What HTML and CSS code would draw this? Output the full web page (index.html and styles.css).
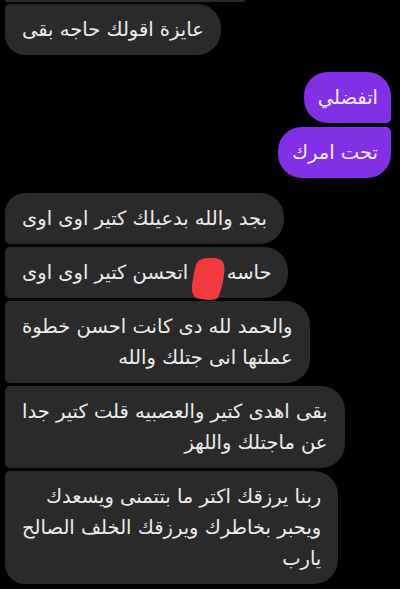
FILE: index.html
```html
<!DOCTYPE html>
<html>
  <head>
    <meta charset="utf-8">
    <link rel="stylesheet" href="styles.css">
  </head>
  <body>
    <div class="chat">
      <div class="prev-tail"></div>

      <div class="msg in last" dir="rtl">عايزة اقولك حاجه بقى</div>

      <div class="group-out">
        <div class="msg out first" dir="rtl">اتفضلي</div>
        <div class="msg out last" dir="rtl">تحت امرك</div>
      </div>

      <div class="group-in">
        <div class="msg in first" dir="rtl">بجد والله بدعيلك كتير اوى اوى</div>
        <div class="msg in" dir="rtl">حاسه <span class="hidden-word"><svg class="blob" viewBox="0 0 36 44" width="36" height="44"><path d="M10 3 C16 0 26 0 31 3 C35 6 35 12 34 18 C33 26 31 34 28 41 C24 44 14 43 6 41 C3 38 1 34 2 28 C3 22 4 14 6 8 C7 5 8 4 10 3 Z" fill="#f2393e"/></svg></span> اتحسن كتير اوى اوى</div>
        <div class="msg in" dir="rtl">والحمد لله دى كانت احسن خطوة<br>عملتها انى جتلك والله</div>
        <div class="msg in" dir="rtl">بقى اهدى كتير والعصبيه قلت كتير جدا<br>عن ماجتلك واللهز</div>
        <div class="msg in last" dir="rtl">ربنا يرزقك اكتر ما بتتمنى ويسعدك<br>ويحبر بخاطرك ويرزقك الخلف الصالح<br>يارب</div>
      </div>
    </div>
  </body>
</html>
```

FILE: styles.css
```css
* {
  margin: 0;
  padding: 0;
  box-sizing: border-box;
}

body {
  background: #000;
  font-family: "DejaVu Sans", "Noto Sans", sans-serif;
  overflow: hidden;
}

.chat {
  display: flex;
  flex-direction: column;
  align-items: flex-start;
  padding: 0 9px 0 5px;
}

.prev-tail {
  width: 240px;
  height: 2px;
  background: #2a2a2a;
  border-radius: 0 0 4px 4px;
}

.msg {
  font-size: 19.5px;
  line-height: 31px;
  padding: 10px 17px;
  white-space: nowrap;
  text-align: right;
}

.msg.in {
  background: #2a2a2a;
  color: #ececec;
  border-radius: 5px 24px 24px 5px;
}

.msg.in.first {
  border-top-left-radius: 20px;
}

.msg.in.last {
  border-bottom-left-radius: 20px;
}

.chat > .msg.in.last {
  margin-top: 2px;
}

.group-out {
  align-self: flex-end;
  display: flex;
  flex-direction: column;
  align-items: flex-end;
  gap: 4px;
  margin-top: 17px;
}

.msg.out {
  background: #8230e6;
  color: #f6ecff;
  padding: 10px 13px 10px 14px;
  border-radius: 24px 5px 5px 24px;
}

.msg.out.first {
  border-top-right-radius: 24px;
}

.msg.out.last {
  border-bottom-right-radius: 24px;
}

.group-in {
  display: flex;
  flex-direction: column;
  align-items: flex-start;
  gap: 3px;
  margin-top: 15px;
}

.hidden-word {
  display: inline-block;
  position: relative;
  width: 26px;
  height: 10px;
}

.blob {
  position: absolute;
  z-index: 1;
  left: -4px;
  top: -12px;
}
```
